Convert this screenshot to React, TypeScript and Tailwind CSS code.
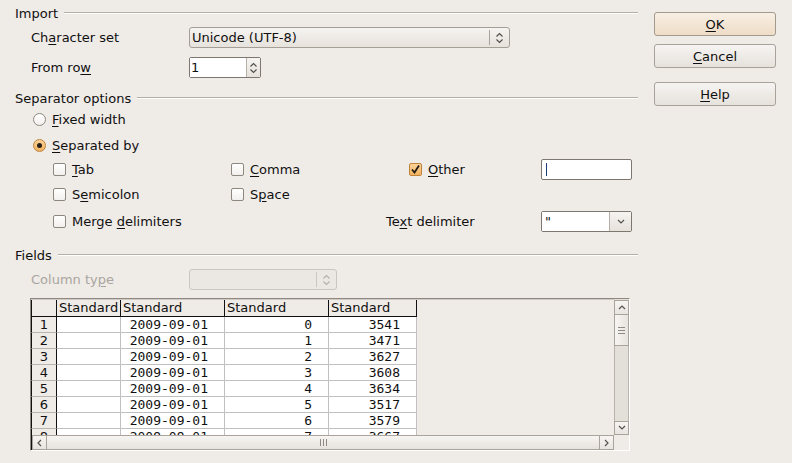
import { ReactNode } from 'react';

const U = ({ children }: { children: ReactNode }) => (
  <span className="underline underline-offset-[2px] decoration-1">{children}</span>
);

function UpDown({ color = '#4d4a45' }: { color?: string }) {
  return (
    <svg width="9" height="14" viewBox="0 0 9 14">
      <path d="M1.5 5.5 L4.5 2.5 L7.5 5.5 M1.5 8.5 L4.5 11.5 L7.5 8.5" stroke={color} fill="none" strokeWidth="1.1" />
    </svg>
  );
}

function Chevron({ dir, color = '#55524d' }: { dir: 'up' | 'down' | 'left' | 'right'; color?: string }) {
  const d = {
    up: 'M1 5 L4 2 L7 5',
    down: 'M1 2 L4 5 L7 2',
    left: 'M5 1 L2 4 L5 7',
    right: 'M2 1 L5 4 L2 7',
  }[dir];
  return (
    <svg width="8" height="8" viewBox="0 0 8 8">
      <path d={d} stroke={color} fill="none" strokeWidth="1.2" />
    </svg>
  );
}

function Section({ title }: { title: string }) {
  return (
    <div className="flex items-center h-[18px]">
      <span className="leading-none">{title}</span>
      <div className="flex-1 ml-[6px] h-0 border-t border-b border-t-[#b3aea6] border-b-white" />
    </div>
  );
}

function Checkbox({ checked, label }: { checked?: boolean; label: ReactNode }) {
  return (
    <div className="flex items-center h-[18px]">
      {checked ? (
        <div className="w-[13px] h-[13px] rounded-[2px] border border-[#c1833a] bg-gradient-to-b from-[#fbd39a] to-[#f2b25e] flex items-center justify-center">
          <svg width="11" height="11" viewBox="0 0 11 11">
            <path d="M2 5.5 L4.5 8.5 L9 1.5" stroke="#1e1a14" fill="none" strokeWidth="1.8" />
          </svg>
        </div>
      ) : (
        <div className="w-[13px] h-[13px] rounded-[2px] border border-[#8d877e] bg-gradient-to-b from-white to-[#f2f0ed]" />
      )}
      <span className="ml-[6px] leading-none">{label}</span>
    </div>
  );
}

function Radio({ checked, label }: { checked?: boolean; label: ReactNode }) {
  return (
    <div className="flex items-center h-[18px]">
      {checked ? (
        <div className="w-[13px] h-[13px] rounded-full border border-[#c1833a] bg-gradient-to-b from-[#fbd39a] to-[#f2b25e] flex items-center justify-center">
          <div className="w-[5px] h-[5px] rounded-full bg-[#2a2218]" />
        </div>
      ) : (
        <div className="w-[13px] h-[13px] rounded-full border border-[#8d877e] bg-gradient-to-b from-white to-[#f2f0ed]" />
      )}
      <span className="ml-[6px] leading-none">{label}</span>
    </div>
  );
}

function Button({ children, def }: { children: ReactNode; def?: boolean }) {
  return (
    <div
      className={
        'w-[122px] h-[24px] rounded-[3px] border flex items-center justify-center leading-none ' +
        (def
          ? 'border-[#a39a8e] bg-gradient-to-b from-[#f8efe4] to-[#eedcc6]'
          : 'border-[#a8a29a] bg-gradient-to-b from-[#f6f4f2] to-[#e6e2dc]')
      }
    >
      {children}
    </div>
  );
}

const rows = [
  ['0', '3541'],
  ['1', '3471'],
  ['2', '3627'],
  ['3', '3608'],
  ['4', '3634'],
  ['5', '3517'],
  ['6', '3579'],
  ['7', '3667'],
];

function Table() {
  return (
    <div className="ml-[15px] mt-[8px] w-[600px] h-[153px] border border-t-[#8e8880] border-l-[#8e8880] border-r-white border-b-white flex flex-col">
      <div className="flex h-[136px]">
        <div className="w-[583px] h-[136px] overflow-hidden bg-[#efebe7]">
          {/* header row */}
          <div className="flex h-[18px] border-t border-[#cfcac3]">
            <div className="w-[26px] h-[17px] border-l border-r border-b border-[#111]" />
            {[64, 104, 104, 88].map((w, i) => (
              <div
                key={i}
                style={{ width: w }}
                className="h-[17px] border-r border-b border-[#111] pl-[2px] leading-[16px]"
              >
                Standard
              </div>
            ))}
          </div>
          {rows.map((r, i) => (
            <div key={i} className="flex h-[16px]">
              <div className="w-[26px] h-[16px] border-l border-r border-r-[#111] border-l-[#111] border-b border-b-[#b9b6b1] text-center leading-[15px]">
                {i + 1}
              </div>
              <div className="w-[64px] h-[16px] bg-white border-r border-b border-[#c0c0c0]" />
              <div className="w-[104px] h-[16px] bg-white border-r border-b border-[#c0c0c0] text-right pr-[16px] leading-[15px] font-['DejaVu_Sans_Mono',monospace]">
                2009-09-01
              </div>
              <div className="w-[104px] h-[16px] bg-white border-r border-b border-[#c0c0c0] text-right pr-[16px] leading-[15px] font-['DejaVu_Sans_Mono',monospace]">
                {r[0]}
              </div>
              <div className="w-[88px] h-[16px] bg-white border-r border-b border-[#c0c0c0] text-right pr-[16px] leading-[15px] font-['DejaVu_Sans_Mono',monospace]">
                {r[1]}
              </div>
            </div>
          ))}
        </div>
        {/* vertical scrollbar */}
        <div className="w-[15px] h-[136px] flex flex-col pt-[1px] bg-[#e3dfd9]">
          <div className="h-[15px] border border-[#a9a39b] bg-gradient-to-b from-[#f7f5f3] to-[#e8e4df] flex items-center justify-center">
            <Chevron dir="up" />
          </div>
          <div className="h-[31px] border border-t-0 border-[#a9a39b] bg-gradient-to-r from-[#f7f5f3] to-[#e8e4df] flex flex-col items-center justify-center gap-[2px]">
            <div className="w-[7px] h-px bg-[#8f8a83]" />
            <div className="w-[7px] h-px bg-[#8f8a83]" />
            <div className="w-[7px] h-px bg-[#8f8a83]" />
          </div>
          <div className="flex-1 border-l border-r border-[#b9b3ab]" />
          <div className="h-[14px] border border-[#a9a39b] bg-gradient-to-b from-[#f7f5f3] to-[#e8e4df] flex items-center justify-center">
            <Chevron dir="down" />
          </div>
        </div>
      </div>
      {/* horizontal scrollbar */}
      <div className="flex h-[15px]">
        <div className="w-[583px] flex border-l border-[#111]">
          <div className="w-[15px] border border-[#a9a39b] bg-gradient-to-b from-[#f7f5f3] to-[#e8e4df] flex items-center justify-center">
            <Chevron dir="left" />
          </div>
          <div className="flex-1 border-t border-b border-[#a9a39b] bg-gradient-to-b from-[#f7f5f3] to-[#e6e2dc] flex items-center justify-center gap-[2px]">
            <div className="w-px h-[7px] bg-[#8f8a83]" />
            <div className="w-px h-[7px] bg-[#8f8a83]" />
            <div className="w-px h-[7px] bg-[#8f8a83]" />
          </div>
          <div className="w-[15px] border border-[#a9a39b] bg-gradient-to-b from-[#f7f5f3] to-[#e8e4df] flex items-center justify-center">
            <Chevron dir="right" />
          </div>
        </div>
        <div className="w-[15px]" />
      </div>
    </div>
  );
}

export default function App() {
  return (
    <div className="w-[792px] h-[463px] bg-[#efebe7] text-[#101010] text-[13px] font-['DejaVu_Sans',sans-serif] flex overflow-hidden">
      <div className="w-[640px] pl-[15px] pr-[2px] pt-[4px] flex flex-col">
        <Section title="Import" />
        <div className="pl-[16px] mt-[5px] flex items-center h-[21px]">
          <span className="w-[158px] leading-none">
            Ch<U>a</U>racter set
          </span>
          <div className="w-[321px] h-[21px] rounded-[3px] border border-[#a49e96] bg-gradient-to-b from-[#f6f4f1] to-[#e6e2dc] flex items-center pl-[2px]">
            <span className="flex-1 leading-none">Unicode (UTF-8)</span>
            <div className="w-px h-[15px] bg-[#a8a29a]" />
            <div className="w-[19px] flex items-center justify-center">
              <UpDown />
            </div>
          </div>
        </div>
        <div className="pl-[16px] mt-[9px] flex items-center h-[21px]">
          <span className="w-[158px] leading-none">
            From ro<U>w</U>
          </span>
          <div className="w-[72px] h-[21px] rounded-[2px] border border-[#7d776f] flex">
            <div className="w-[56px] bg-white flex items-center pl-px leading-none">1</div>
            <div className="flex-1 border-l border-[#b6b0a8] bg-gradient-to-b from-[#f6f4f1] to-[#e6e2dc] flex items-center justify-center">
              <UpDown />
            </div>
          </div>
        </div>

        <div className="mt-[11px]">
          <Section title="Separator options" />
        </div>
        <div className="pl-[18px] mt-[3px]">
          <Radio label={<><U>F</U>ixed width</>} />
        </div>
        <div className="pl-[18px] mt-[8px]">
          <Radio checked label={<><U>S</U>eparated by</>} />
        </div>
        <div className="pl-[38px] mt-[5px] flex items-center h-[21px]">
          <div className="w-[178px]">
            <Checkbox label={<><U>T</U>ab</>} />
          </div>
          <div className="w-[178px]">
            <Checkbox label={<><U>C</U>omma</>} />
          </div>
          <div className="w-[132px]">
            <Checkbox checked label={<><U>O</U>ther</>} />
          </div>
          <div className="w-[91px] h-[21px] rounded-[2px] border border-[#7d776f] bg-white flex items-center pl-[4px]">
            <div className="w-px h-[13px] bg-[#1f3b7a]" />
          </div>
        </div>
        <div className="pl-[38px] mt-[5px] flex items-center h-[18px]">
          <div className="w-[178px]">
            <Checkbox label={<>S<U>e</U>micolon</>} />
          </div>
          <div className="w-[178px]">
            <Checkbox label={<>S<U>p</U>ace</>} />
          </div>
        </div>
        <div className="pl-[38px] mt-[8px] flex items-center h-[21px]">
          <div className="w-[333px]">
            <Checkbox label={<>Merge <U>d</U>elimiters</>} />
          </div>
          <span className="w-[155px] leading-none">
            Te<U>x</U>t delimiter
          </span>
          <div className="w-[91px] h-[21px] rounded-[2px] border border-[#7d776f] flex">
            <div className="flex-1 bg-white flex items-center pl-[3px] leading-none">"</div>
            <div className="w-[22px] border-l border-[#b6b0a8] bg-gradient-to-b from-[#f6f4f1] to-[#e6e2dc] flex items-center justify-center">
              <Chevron dir="down" />
            </div>
          </div>
        </div>

        <div className="mt-[14px]">
          <Section title="Fields" />
        </div>
        <div className="pl-[16px] mt-[5px] flex items-center h-[21px] text-[#aaa59e]">
          <span className="w-[158px] leading-none">
            Column ty<U>p</U>e
          </span>
          <div className="w-[148px] h-[21px] rounded-[3px] border border-[#cbc6bf] bg-[#ebe7e2] flex items-center justify-end">
            <div className="w-px h-[15px] bg-[#cbc6bf]" />
            <div className="w-[19px] flex items-center justify-center">
              <UpDown color="#b3aea7" />
            </div>
          </div>
        </div>
        <Table />
      </div>

      <div className="pl-[14px] pt-[12px] flex flex-col">
        <Button def>
          <U>O</U>K
        </Button>
        <div className="mt-[8px]">
          <Button>
            <U>C</U>ancel
          </Button>
        </div>
        <div className="mt-[14px]">
          <Button>
            <U>H</U>elp
          </Button>
        </div>
      </div>
    </div>
  );
}
